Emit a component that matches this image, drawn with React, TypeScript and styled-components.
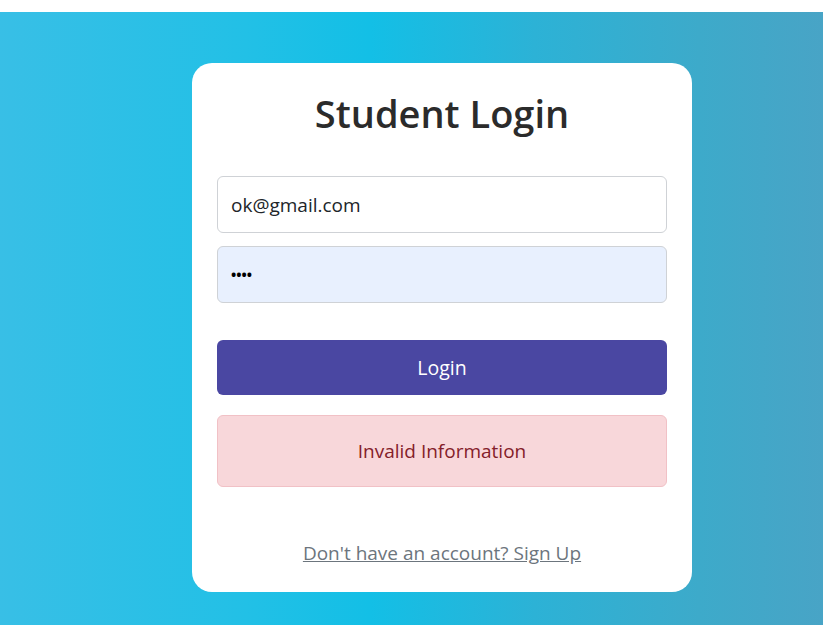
import React from "react";
import styled, { createGlobalStyle } from "styled-components";

const Global = createGlobalStyle`
  html, body { margin: 0; padding: 0; background: #fff; }
  body { font-family: "Open Sans", "Noto Sans", sans-serif; }
  * { box-sizing: border-box; }
`;

const Page = styled.div`
  margin-top: 12px;
  height: 613px;
  background: linear-gradient(90deg, #38bfe6 0%, #22c0e6 30%, #13bfe6 45%, #2cb2d6 65%, #3daaca 85%, #48a4c6 100%);
  display: flex;
  justify-content: center;
  align-items: flex-start;
  padding-top: 51px;
  padding-left: 61px;
`;

const Card = styled.div`
  width: 500px;
  height: 529px;
  background: #fff;
  border-radius: 20px;
  padding: 22px 25px 0;
  display: flex;
  flex-direction: column;
`;

const Title = styled.h2`
  margin: 0 0 35px;
  text-align: center;
  font-size: 38px;
  font-weight: 600;
  color: #2b2b2b;
  line-height: 56px;
`;

const Input = styled.div<{ $filled?: boolean }>`
  height: 57px;
  border: 1px solid #cfd2d6;
  border-radius: 6px;
  background: ${(p) => (p.$filled ? "#e8f0fe" : "#fff")};
  padding: 0 13px;
  display: flex;
  align-items: center;
  font-size: 19px;
  color: #212529;
  margin-bottom: 13px;
`;

const Dots = styled.span`
  font-size: 14px;
  color: #000;
  font-weight: 700;
`;

const Button = styled.button`
  margin-top: 24px;
  height: 55px;
  border: none;
  border-radius: 6px;
  background: #4a47a2;
  color: #fff;
  font-family: inherit;
  font-size: 19.5px;
`;

const Alert = styled.div`
  margin-top: 20px;
  height: 72px;
  border: 1px solid #f1c1c6;
  border-radius: 6px;
  background: #f8d7da;
  color: #842029;
  font-size: 19px;
  display: flex;
  align-items: center;
  justify-content: center;
`;

const Link = styled.a`
  margin-top: 53px;
  text-align: center;
  color: #6c757d;
  font-size: 19px;
  text-decoration: underline;
`;

export default function App() {
  return (
    <>
      <Global />
      <Page>
        <Card>
          <Title>Student Login</Title>
          <Input>ok@gmail.com</Input>
          <Input $filled>
            <Dots>••••</Dots>
          </Input>
          <Button>Login</Button>
          <Alert>Invalid Information</Alert>
          <Link href="#">Don't have an account? Sign Up</Link>
        </Card>
      </Page>
    </>
  );
}
